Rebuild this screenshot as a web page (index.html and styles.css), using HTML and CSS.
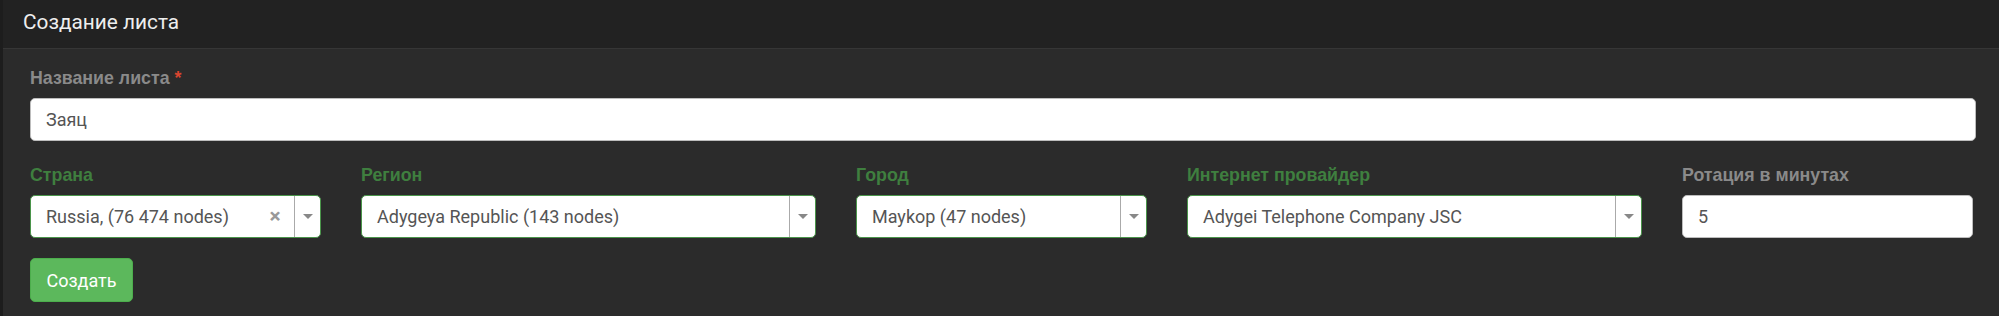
FILE: index.html
```html
<!DOCTYPE html>
<html lang="ru">
<head>
<meta charset="utf-8">
<title>Создание листа</title>
<link rel="stylesheet" href="styles.css">
</head>
<body>
<div class="page">
  <div class="panel">
    <div class="panel-heading">Создание листа</div>
    <div class="panel-body">
      <div class="field">
        <label class="label">Название листа <span class="req">*</span></label>
        <div class="input">Заяц</div>
      </div>
      <div class="row">
        <div class="col col-2 success">
          <label class="label">Страна</label>
          <div class="select">
            <span class="sel-text">Russia, (76 474 nodes)</span>
            <span class="sel-clear">×</span>
            <span class="sel-arrow"><span class="tri"></span></span>
          </div>
        </div>
        <div class="col col-3 success">
          <label class="label">Регион</label>
          <div class="select">
            <span class="sel-text">Adygeya Republic (143 nodes)</span>
            <span class="sel-arrow"><span class="tri"></span></span>
          </div>
        </div>
        <div class="col col-2 success">
          <label class="label">Город</label>
          <div class="select">
            <span class="sel-text">Maykop (47 nodes)</span>
            <span class="sel-arrow"><span class="tri"></span></span>
          </div>
        </div>
        <div class="col col-3 success">
          <label class="label">Интернет провайдер</label>
          <div class="select">
            <span class="sel-text">Adygei Telephone Company JSC</span>
            <span class="sel-arrow"><span class="tri"></span></span>
          </div>
        </div>
        <div class="col col-2">
          <label class="label">Ротация в минутах</label>
          <div class="input">5</div>
        </div>
      </div>
      <div class="actions">
        <button class="btn">Создать</button>
      </div>
    </div>
  </div>
</div>
</body>
</html>
```

FILE: styles.css
```css
html, body {
  margin: 0;
  padding: 0;
  background: #2b2b2b;
}
body {
  font-family: Roboto, "Liberation Sans", sans-serif;
  width: 1999px;
  height: 316px;
  overflow: hidden;
}
.page {
  height: 316px;
  border-left: 3px solid #1d1d1d;
  box-sizing: border-box;
}
.panel {
  background: #2b2b2b;
  height: 100%;
}
.panel-heading {
  height: 49px;
  box-sizing: border-box;
  background: #222222;
  border-bottom: 1px solid #363636;
  padding-left: 20px;
  font-size: 20.8px;
  line-height: 45px;
  color: #eeeeee;
}
.panel-body {
  padding: 17px 23px 0 27px;
}
.label {
  display: block;
  font-family: "Liberation Sans", Arial, sans-serif;
  font-weight: bold;
  font-size: 17.8px;
  line-height: 24px;
  color: #8a8a8a;
  margin-bottom: 8px;
  white-space: nowrap;
}
.req {
  color: #d9452f;
}
.input {
  height: 43px;
  box-sizing: border-box;
  background: #fff;
  border: 1px solid #bdbdbd;
  border-radius: 5px;
  padding-left: 15px;
  font-size: 18px;
  line-height: 41px;
  color: #555;
}
.row {
  display: flex;
  gap: 40px;
  margin-top: 22px;
}
.col-2 { flex: 0 0 291px; }
.col-3 { flex: 0 0 455px; }
.success .label {
  color: #3f7f3f;
}
.select {
  display: flex;
  align-items: stretch;
  height: 43px;
  box-sizing: border-box;
  background: #fff;
  border: 1px solid #4a944a;
  border-radius: 5px;
  font-size: 18px;
  color: #555;
}
.sel-text {
  flex: 1;
  padding-left: 15px;
  line-height: 41px;
  white-space: nowrap;
  overflow: hidden;
}
.sel-clear {
  width: 38px;
  text-align: center;
  font-size: 21px;
  font-weight: bold;
  line-height: 40px;
  color: #999;
}
.sel-arrow {
  width: 25px;
  border-left: 1px solid #aaa;
  display: flex;
  align-items: center;
  justify-content: center;
}
.tri {
  width: 0;
  height: 0;
  border-left: 5px solid transparent;
  border-right: 5px solid transparent;
  border-top: 5px solid #888;
}
.actions {
  margin-top: 20px;
}
.btn {
  width: 103px;
  height: 44px;
  background: #5cb85c;
  border: 1px solid #4cae4c;
  border-radius: 5px;
  color: #fff;
  font-family: Roboto, "Liberation Sans", sans-serif;
  font-size: 18px;
  padding: 0;
}
```
